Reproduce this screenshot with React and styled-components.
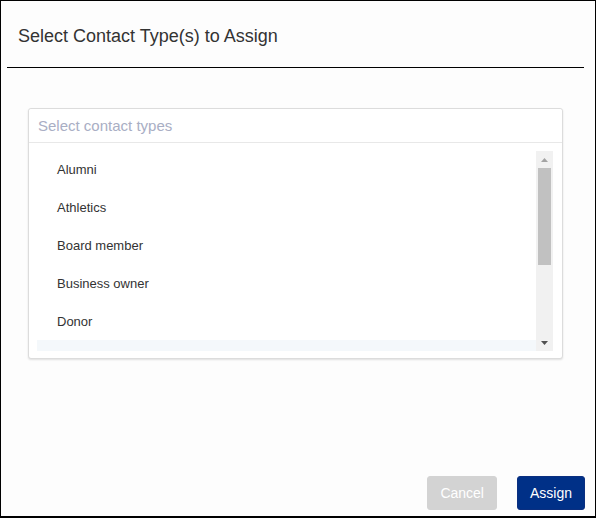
import React from "react";
import styled, { createGlobalStyle } from "styled-components";

const Global = createGlobalStyle`
  html, body { margin: 0; padding: 0; background: #ffffff; }
  body { font-family: "Liberation Sans", Arial, sans-serif; }
  * { box-sizing: border-box; }
`;

const Dialog = styled.div`
  width: 596px;
  height: 518px;
  border: 1px solid #000;
  border-bottom-width: 2px;
  background: #fdfdfd;
  display: flex;
  flex-direction: column;
`;

const Header = styled.div`
  height: 67px;
  margin: 0 11px 0 6px;
  border-bottom: 1px solid #000;
  display: flex;
  align-items: center;
  padding-left: 11px;
  padding-top: 5px;
`;

const Title = styled.h2`
  margin: 0;
  font-size: 18px;
  font-weight: normal;
  color: #333;
`;

const Body = styled.div`
  flex: 1;
  padding: 40px 32px 0 27px;
`;

const SelectBox = styled.div`
  width: 535px;
  border: 1px solid #dcdcdc;
  border-radius: 3px;
  background: #fff;
  box-shadow: 0 1px 2px rgba(0, 0, 0, 0.12);
`;

const SearchInput = styled.input`
  display: block;
  width: 100%;
  height: 34px;
  border: none;
  border-bottom: 1px solid #e8e8e8;
  border-radius: 3px 3px 0 0;
  padding: 0 9px 1px;
  font-family: inherit;
  font-size: 15px;
  color: #333;
  background: #fff;
  outline: none;
  &::placeholder { color: #a9aec4; }
`;

const ListFrame = styled.div`
  display: flex;
  height: 200px;
  margin: 8px 9px 7px 8px;
`;

const Viewport = styled.div`
  flex: 1;
  overflow: hidden;
  margin-top: -1px;
`;

const List = styled.ul`
  list-style: none;
  margin: 0;
  padding: 0;
`;

const Item = styled.li`
  height: 38px;
  display: flex;
  align-items: center;
  padding-left: 20px;
  font-size: 13px;
  color: #333;
  background: ${(p) => (p.$active ? "#f4f8fb" : "transparent")};
`;

const ScrollBar = styled.div`
  width: 17px;
  background: #f1f1f1;
  display: flex;
  flex-direction: column;
`;

const ScrollButton = styled.div`
  height: 17px;
  display: flex;
  align-items: center;
  justify-content: center;
`;

const Track = styled.div`
  flex: 1;
  padding: 0 2px;
`;

const Thumb = styled.div`
  height: 97px;
  background: #c1c1c1;
`;

const Footer = styled.div`
  display: flex;
  justify-content: flex-end;
  gap: 20px;
  padding: 0 10px 6px 0;
`;

const Button = styled.button`
  height: 34px;
  padding: 0 12px;
  border: 1px solid ${(p) => (p.$primary ? "#0b2f80" : "#d3d3d3")};
  border-radius: 3px;
  background: ${(p) => (p.$primary ? "#003087" : "#d3d3d3")};
  color: #fff;
  font-family: inherit;
  font-size: 14px;
  cursor: pointer;
`;

const items = ["Alumni", "Athletics", "Board member", "Business owner", "Donor", "Employee"];

export default function App() {
  return (
    <>
      <Global />
      <Dialog>
        <Header>
          <Title>Select Contact Type(s) to Assign</Title>
        </Header>
        <Body>
          <SelectBox>
            <SearchInput placeholder="Select contact types" />
            <ListFrame>
              <Viewport>
                <List>
                  {items.map((it, i) => (
                    <Item key={it} $active={i === 5}>
                      {it}
                    </Item>
                  ))}
                </List>
              </Viewport>
              <ScrollBar>
                <ScrollButton>
                  <svg width="7" height="4" viewBox="0 0 7 4">
                    <path d="M3.5 0 L7 4 L0 4 Z" fill="#a3a3a3" />
                  </svg>
                </ScrollButton>
                <Track>
                  <Thumb />
                </Track>
                <ScrollButton>
                  <svg width="7" height="4" viewBox="0 0 7 4">
                    <path d="M0 0 L7 0 L3.5 4 Z" fill="#505050" />
                  </svg>
                </ScrollButton>
              </ScrollBar>
            </ListFrame>
          </SelectBox>
        </Body>
        <Footer>
          <Button>Cancel</Button>
          <Button $primary>Assign</Button>
        </Footer>
      </Dialog>
    </>
  );
}
